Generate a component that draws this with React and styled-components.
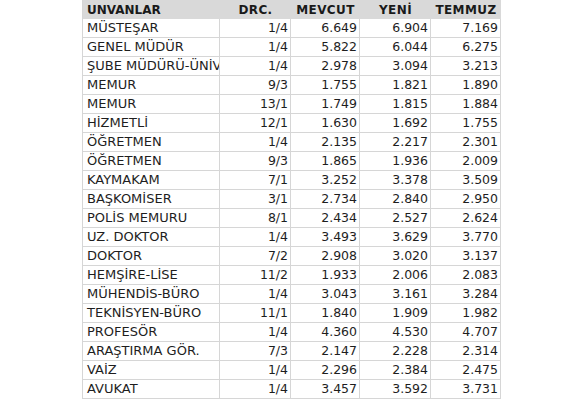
import React from 'react';
import styled, { createGlobalStyle } from 'styled-components';

const rows = [
  ['MÜSTEŞAR', '1/4', '6.649', '6.904', '7.169'],
  ['GENEL MÜDÜR', '1/4', '5.822', '6.044', '6.275'],
  ['ŞUBE MÜDÜRÜ-ÜNİV.', '1/4', '2.978', '3.094', '3.213'],
  ['MEMUR', '9/3', '1.755', '1.821', '1.890'],
  ['MEMUR', '13/1', '1.749', '1.815', '1.884'],
  ['HİZMETLİ', '12/1', '1.630', '1.692', '1.755'],
  ['ÖĞRETMEN', '1/4', '2.135', '2.217', '2.301'],
  ['ÖĞRETMEN', '9/3', '1.865', '1.936', '2.009'],
  ['KAYMAKAM', '7/1', '3.252', '3.378', '3.509'],
  ['BAŞKOMİSER', '3/1', '2.734', '2.840', '2.950'],
  ['POLİS MEMURU', '8/1', '2.434', '2.527', '2.624'],
  ['UZ. DOKTOR', '1/4', '3.493', '3.629', '3.770'],
  ['DOKTOR', '7/2', '2.908', '3.020', '3.137'],
  ['HEMŞİRE-LİSE', '11/2', '1.933', '2.006', '2.083'],
  ['MÜHENDİS-BÜRO', '1/4', '3.043', '3.161', '3.284'],
  ['TEKNİSYEN-BÜRO', '11/1', '1.840', '1.909', '1.982'],
  ['PROFESÖR', '1/4', '4.360', '4.530', '4.707'],
  ['ARAŞTIRMA GÖR.', '7/3', '2.147', '2.228', '2.314'],
  ['VAİZ', '1/4', '2.296', '2.384', '2.475'],
  ['AVUKAT', '1/4', '3.457', '3.592', '3.731'],
];

const headers = ['UNVANLAR', 'DRC.', 'MEVCUT', 'YENİ', 'TEMMUZ'];

const GlobalStyle = createGlobalStyle`
  html, body {
    margin: 0;
    padding: 0;
    background: #ffffff;
  }
`;

const Page = styled.div`
  width: 575px;
  height: 400px;
  overflow: hidden;
  padding-left: 82px;
  box-sizing: border-box;
`;

const Grid = styled.div`
  display: grid;
  grid-template-columns: 137px 71px 69px 71px 70px;
  width: 419px;
  border-left: 1px solid #d6d6d6;
  font-family: 'DejaVu Sans', Verdana, sans-serif;
  color: #1e1e1e;
`;

const HeadCell = styled.div`
  height: 19px;
  line-height: 20px;
  background: #d9d9d9;
  font-size: 12px;
  font-weight: bold;
  color: #1a1a1a;
  white-space: nowrap;
  text-align: ${p => (p.$first ? 'left' : 'center')};
  padding-left: ${p => (p.$first ? '4px' : '0')};
  letter-spacing: ${p => (p.$first ? '0' : '0.4px')};
  box-sizing: border-box;
`;

const Cell = styled.div`
  height: 19px;
  line-height: 18px;
  border-right: 1px solid #d6d6d6;
  border-bottom: 1px solid #d6d6d6;
  box-sizing: border-box;
  white-space: nowrap;
  overflow: hidden;
  font-size: ${p => (p.$first ? '13px' : '12.5px')};
  text-align: ${p => (p.$first ? 'left' : 'right')};
  padding: ${p => (p.$first ? '0 0 0 4px' : '0 2px 0 0')};
`;

export default function App() {
  return (
    <Page>
      <GlobalStyle />
      <Grid>
        {headers.map((h, i) => (
          <HeadCell key={h} $first={i === 0}>{h}</HeadCell>
        ))}
        {rows.map((r, ri) =>
          r.map((v, ci) => (
            <Cell key={ri + '-' + ci} $first={ci === 0}>{v}</Cell>
          ))
        )}
      </Grid>
    </Page>
  );
}
